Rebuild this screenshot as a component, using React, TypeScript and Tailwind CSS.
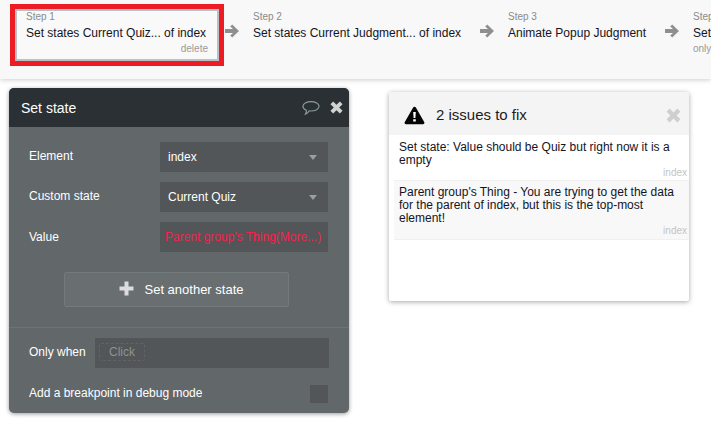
const font = "font-['Liberation_Sans',Arial,sans-serif]";

const ArrowIcon = () => (
  <svg width="14" height="14" viewBox="0 0 14 14" className="shrink-0">
    <path d="M7.2 0.4 L14 7 L7.2 13.6 L5.2 11.6 L8 9.1 H0 V4.9 H8 L5.2 2.4 Z" fill="#8f8f8f" />
  </svg>
);

const CloseIcon = ({ color, size }: { color: string; size: number }) => (
  <svg width={size} height={size} viewBox="0 0 14 14">
    <path d="M0.5 3.4 L3.4 0.5 L7 4.1 L10.6 0.5 L13.5 3.4 L9.9 7 L13.5 10.6 L10.6 13.5 L7 9.9 L3.4 13.5 L0.5 10.6 L4.1 7 Z" fill={color} />
  </svg>
);

const Step = ({ n, title, sub, className }: { n: string; title: string; sub?: string; className: string }) => (
  <div className={`shrink-0 ${className}`}>
    <div className="text-[10px] leading-[12px] text-[#8a8a8a]">{n}</div>
    <div className="mt-[2px] text-[12px] leading-[16px] text-[#14141e] whitespace-nowrap">{title}</div>
    {sub && <div className="mt-[2px] text-[10px] leading-[12px] text-[#999] text-right">{sub}</div>}
  </div>
);

const Select = ({ label }: { label: string }) => (
  <div className="flex items-center justify-between w-[168px] h-[30px] bg-[#525658] pl-[8px] pr-[11px] text-[12px] text-white">
    <span>{label}</span>
    <span className="w-0 h-0 border-x-[4px] border-x-transparent border-t-[5px] border-t-[#9a9ea1]" />
  </div>
);

export default function App() {
  return (
    <div className={`relative w-[711px] h-[424px] overflow-hidden bg-white ${font}`}>
      <div className="relative z-10 flex h-[79px] bg-[#f8f8f8] shadow-[0_1px_5px_rgba(0,0,0,0.2)] pl-[10px] pt-[4px]">
        <div className="shrink-0 w-[214px] h-[62px] border-[5px] border-[#ed1c24]">
          <div className="w-full h-full border-2 border-[#b8c2c6] bg-[#f9f9f9] px-[9px]">
            <Step n="Step 1" title="Set states Current Quiz... of index" className="w-full" sub="delete" />
          </div>
        </div>
        <div className="flex shrink-0 items-start pt-[20px] pl-[1px] w-[29px]"><ArrowIcon /></div>
        <div className="shrink-0 pt-[7px]"><Step n="Step 2" title="Set states Current Judgment... of index" className="w-[209px]" /></div>
        <div className="flex shrink-0 items-start pt-[20px] pl-[18px] w-[46px]"><ArrowIcon /></div>
        <div className="shrink-0 pt-[7px]"><Step n="Step 3" title="Animate Popup Judgment" className="w-[157px]" /></div>
        <div className="flex shrink-0 items-start pt-[20px] w-[28px]"><ArrowIcon /></div>
        <div className="shrink-0 pt-[7px]">
          <div className="text-[10px] leading-[12px] text-[#8a8a8a] whitespace-nowrap">Step 4</div>
          <div className="mt-[2px] text-[12px] leading-[16px] text-[#14141e]">Set</div>
          <div className="mt-[2px] text-[10px] leading-[12px] text-[#999]">only</div>
        </div>
      </div>

      <div className="flex items-start pl-[9px] pt-[9px]">
        <div className="shrink-0 w-[340px] h-[325px] rounded-[5px] overflow-hidden bg-[#62676a] shadow-[0_1px_4px_rgba(0,0,0,0.4)]">
          <div className="flex items-center justify-between h-[39px] bg-[#2a3033] pl-[12px] pr-[6px]">
            <span className="text-[14px] text-white pt-[1px]">Set state</span>
            <div className="flex items-center gap-[10px]">
              <svg width="18" height="16" viewBox="0 0 19 16" fill="none">
                <path d="M9.5 1.2 C14.2 1.2 18 3.4 18 6.2 C18 9 14.2 11.2 9.5 11.2 C8.8 11.2 8.2 11.1 7.6 11 C6.8 12.6 5.4 14 3.6 14.6 C4.4 13.4 4.8 12 4.6 10.4 C2.4 9.5 1 8 1 6.2 C1 3.4 4.8 1.2 9.5 1.2 Z" stroke="#8e9ba1" strokeWidth="1.2" />
              </svg>
              <CloseIcon color="#d2d2d2" size={13} />
            </div>
          </div>
          <div className="flex flex-col gap-[10px] pt-[15px] pl-[20px] pr-[21px]">
            <div className="flex items-center justify-between">
              <span className="text-[12px] text-white -mt-[2px]">Element</span>
              <Select label="index" />
            </div>
            <div className="flex items-center justify-between">
              <span className="text-[12px] text-white -mt-[2px]">Custom state</span>
              <Select label="Current Quiz" />
            </div>
            <div className="flex items-center justify-between">
              <span className="text-[12px] text-white">Value</span>
              <div className="flex items-center w-[168px] h-[30px] bg-[#525658] pl-[5px] text-[12px] text-[#f5224f] whitespace-nowrap overflow-hidden">
                Parent group's Thing(More...)
              </div>
            </div>
          </div>
          <div className="flex justify-center pr-[5px] pt-[20px]">
            <div className="flex items-center justify-center gap-[10px] w-[225px] h-[35px] bg-[#696e71] border border-[#74797c] rounded-[2px] pl-[10px] text-[13px] text-white">
              <svg width="15" height="15" viewBox="0 0 15 15" className="-mt-[2px]"><path d="M5.5 0.5 H9.5 V5.5 H14.5 V9.5 H9.5 V14.5 H5.5 V9.5 H0.5 V5.5 H5.5 Z" fill="#dcdcdc" /></svg>
              <span className="pt-[1px]">Set another state</span>
            </div>
          </div>
          <div className="mt-[20px] border-t border-[#6d7275] pl-[20px] pr-[20px] pt-[10px]">
            <div className="flex items-center">
              <span className="text-[12px] text-white w-[66px] shrink-0 whitespace-nowrap -mt-[2px]">Only when</span>
              <div className="flex items-center w-[234px] h-[30px] bg-[#525658] pl-[4px]">
                <span className="flex items-center h-[18px] px-[9px] border border-dashed border-[#5f6466] rounded-[2px] text-[12px] text-[#8e9294] -mt-[2px]">Click</span>
              </div>
            </div>
            <div className="flex items-center justify-between pt-[17px] pr-[1px]">
              <span className="text-[12px] text-white -mt-[3px]">Add a breakpoint in debug mode</span>
              <span className="w-[18px] h-[18px] bg-[#525658]" />
            </div>
          </div>
        </div>

        <div className="shrink-0 ml-[40px] mt-[4px] w-[300px] h-[209px] rounded-[2px] bg-white shadow-[0_1px_5px_rgba(0,0,0,0.35)]">
          <div className="flex items-center justify-between h-[43px] bg-[#f4f4f4] pl-[15px] pr-[8px] pt-[3px]">
            <div className="flex items-center gap-[11px]">
              <svg width="21" height="19" viewBox="0 0 21 19">
                <path d="M10.5 0.8 C11.2 0.8 11.6 1.1 12 1.8 L20.2 16 C20.8 17.2 20.2 18.2 19 18.2 H2 C0.8 18.2 0.2 17.2 0.8 16 L9 1.8 C9.4 1.1 9.8 0.8 10.5 0.8 Z" fill="#050505" />
                <path d="M9.2 6 H11.8 L11.4 12 H9.6 Z M9.2 13.2 H11.8 V15.6 H9.2 Z" fill="#fff" />
              </svg>
              <span className="text-[15px] text-[#1c1c1c] pt-[1px]">2 issues to fix</span>
            </div>
            <CloseIcon color="#cfcfcf" size={15} />
          </div>
          <div className="pl-[5px]">
            <div className="h-[46px] border-b border-[#f0f0f0] pl-[5px] pr-[2px] pt-[6px]">
              <div className="text-[12px] leading-[13px] text-[#14141e]">Set state: Value should be Quiz but right now it is a empty</div>
              <div className="text-[10px] leading-[11px] text-right text-[#c4c4c4]">index</div>
            </div>
            <div className="h-[59px] bg-[#f8f8f8] border-b border-[#f0f0f0] pl-[5px] pr-[2px] pt-[5px]">
              <div className="text-[12px] leading-[13px] text-[#14141e]">Parent group's Thing - You are trying to get the data for the parent of index, but this is the top-most element!</div>
              <div className="text-[10px] leading-[11px] text-right text-[#c4c4c4]">index</div>
            </div>
          </div>
        </div>
      </div>
    </div>
  );
}
